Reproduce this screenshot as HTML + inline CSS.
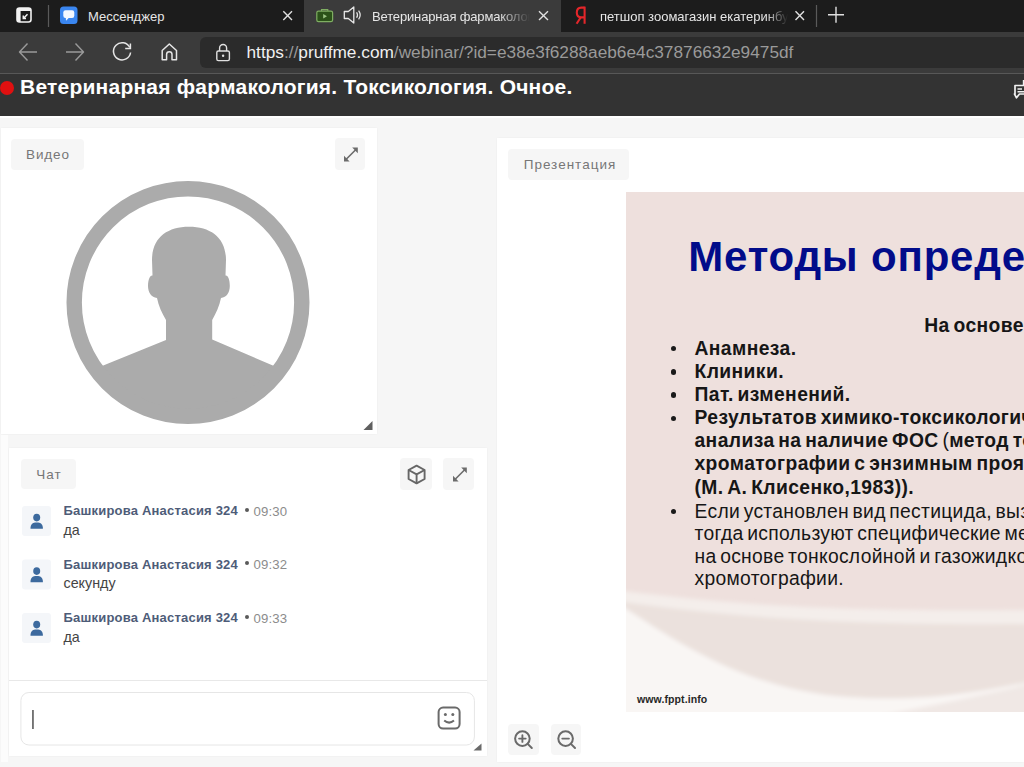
<!DOCTYPE html>
<html><head><meta charset="utf-8">
<style>
*{margin:0;padding:0;box-sizing:border-box}
html,body{width:1024px;height:767px;overflow:hidden;background:#f6f6f6;font-family:"Liberation Sans",sans-serif}
.a{position:absolute}
#tabs{left:0;top:0;width:1024px;height:32px;background:#1c1c1c}
#toolbar{left:0;top:32px;width:1024px;height:42px;background:#3b3b3b}
#actab{left:304px;top:0;width:257px;height:34px;background:#3b3b3b}
.ttl{font-size:13px;color:#e6e6e6;white-space:nowrap;top:9px}
#addr{left:199.5px;top:37px;width:825px;height:30.8px;background:#2b2b2b;border-radius:6px 0 0 6px}
#tbline{left:0;top:73px;width:1024px;height:1px;background:#585858}
#hdr{left:0;top:74px;width:1024px;height:41.6px;background:#333}
#title{left:20px;top:74.5px;font-size:21px;font-weight:bold;color:#fff;white-space:nowrap;letter-spacing:0.22px}
.panel{background:#fff;box-shadow:0 0 2px rgba(0,0,0,0.05)}
.badge{background:#f6f6f6;border-radius:4px}
.bt{color:#777;font-size:13.5px;line-height:13.5px;white-space:nowrap}
.btn{background:#f6f6f6;border-radius:4px}
.nm{font-size:13px;line-height:13px;font-weight:bold;letter-spacing:0.2px;color:#4e5c78;white-space:nowrap}
.dot{width:4px;height:4px;border-radius:50%;background:#5a5a5a}
.tm{font-size:13.2px;line-height:13.2px;letter-spacing:0.2px;color:#8c8c8c;white-space:nowrap}
.tx{font-size:14.3px;line-height:14.3px;color:#444;white-space:nowrap}
.sl{font-size:19.3px;line-height:19.3px;white-space:nowrap;color:#161616;letter-spacing:0.3px;word-spacing:-2px}
.b{font-weight:bold;letter-spacing:0.4px;word-spacing:-2px}
.rg{font-weight:normal}
</style></head><body>
<div id="tabs" class="a"></div>
<div id="actab" class="a"></div>
<div id="toolbar" class="a"></div>
<div id="addr" class="a"></div>
<div id="tbline" class="a"></div>
<div id="hdr" class="a"></div>
<div class="a" style="left:0;top:115.6px;width:1024px;height:2.6px;background:#fff"></div>
<div class="a" style="left:0;top:81px;width:14px;height:14px;border-radius:50%;background:#e01010"></div>
<svg class="a" style="left:1000px;top:74px" width="24" height="41">
 <path d="M15 11.5 H30 V20 H19.5 L16.5 23.8 L14.5 20 H15 Z" fill="none" stroke="#f0f0f0" stroke-width="1.7" stroke-linejoin="round"/>
 <path d="M17.5 15 H22 M17.5 17.8 H26" stroke="#f0f0f0" stroke-width="1.4"/>
 <path d="M23.5 6 V11" stroke="#f0f0f0" stroke-width="1.4"/>
</svg>
<div id="title" class="a">Ветеринарная фармакология. Токсикология. Очное.</div>

<!-- tabs content -->
<svg class="a" style="left:0;top:0" width="1024" height="32">
 <!-- workspace icon -->
 <rect x="17" y="8" width="14" height="14" rx="2.5" fill="none" stroke="#f2f2f2" stroke-width="1.6"/>
 <rect x="17" y="8" width="14" height="3" fill="#f2f2f2"/>
 <rect x="17" y="8" width="3.6" height="14" fill="#f2f2f2"/>
 <path d="M27.5 14.2 L23.6 18.2 M23.3 15.6 L23.3 18.5 L26 18.5" stroke="#f2f2f2" stroke-width="1.5" fill="none"/>
 <line x1="48.5" y1="5" x2="48.5" y2="27" stroke="#5a5a5a" stroke-width="1.2"/>
 <!-- messenger favicon -->
 <rect x="60" y="6.5" width="17.5" height="17.5" rx="3.5" fill="#3a86f0"/>
 <rect x="63.3" y="10.2" width="11" height="7.8" rx="2.2" fill="#f4f8ff"/><path d="M65.8 17.5 L66 20.8 L69.2 17.5 Z" fill="#f4f8ff"/>
 <!-- X close messenger -->
 <path d="M283.3 11.3 L292 20 M292 11.3 L283.3 20" stroke="#e0e0e0" stroke-width="1.4"/>
 <!-- active tab favicon green -->
 <rect x="316.8" y="11.2" width="15.8" height="10.4" rx="1.6" fill="#2b5219" stroke="#7fae62" stroke-width="1.2"/>
 <path d="M321.5 11 V9.6 H327.8 V11" fill="none" stroke="#7fae62" stroke-width="1.1"/>
 <path d="M323.2 14 L327 16.3 L323.2 18.6 z" fill="#9cc585"/>
 <!-- speaker -->
 <path d="M344.3 11.5 h4 l5.5 -4.6 v16.2 l-5.5 -4.6 h-4 z" fill="none" stroke="#e8e8e8" stroke-width="1.3" stroke-linejoin="round"/>
 <path d="M356.6 12.2 q1.8 2.8 0 5.6" fill="none" stroke="#e8e8e8" stroke-width="1.2"/>
 <path d="M358.6 10.6 q3.2 4.4 0 8.8" fill="none" stroke="#e8e8e8" stroke-width="1.2"/>
 <!-- X active -->
 <path d="M539 11.3 L548 20 M548 11.3 L539 20" stroke="#e0e0e0" stroke-width="1.4"/>
 <!-- X yandex -->
 <path d="M795.5 11.3 L804 20 M804 11.3 L795.5 20" stroke="#e0e0e0" stroke-width="1.4"/>
 <line x1="816.5" y1="5" x2="816.5" y2="27" stroke="#5a5a5a" stroke-width="1.2"/>
 <path d="M828 14.8 H844 M836 6.8 V22.8" stroke="#e0e0e0" stroke-width="1.4"/>
</svg>
<svg class="a" style="left:570px;top:0" width="24" height="30"><g fill="none" stroke="#e3262a" stroke-width="2.1"><path d="M14.6 6.6 V23.8"/><path d="M14.6 7.6 H11.2 C8.2 7.6 6.8 9.6 6.8 12.6 C6.8 15.6 8.4 17.4 11.2 17.4 H14.6"/><path d="M10.8 17.2 L6.6 23.8"/></g></svg>
<div class="a ttl" style="left:88px">Мессенджер</div>
<div class="a ttl" style="left:372px;width:158px;overflow:hidden;letter-spacing:-0.15px;-webkit-mask-image:linear-gradient(90deg,#000 80%,transparent 100%)">Ветеринарная фармакология</div>
<div class="a ttl" style="left:600px;width:188px;overflow:hidden;-webkit-mask-image:linear-gradient(90deg,#000 88%,transparent 100%)">петшоп зоомагазин екатеринбург</div>
<!-- toolbar icons -->
<svg class="a" style="left:0;top:32px" width="240" height="40">
 <path d="M20 20 H37 M27.5 11.5 L19.5 20 L27.5 28.5" fill="none" stroke="#9a9a9a" stroke-width="1.4" stroke-linejoin="round"/>
 <path d="M83 20 H66 M75.5 11.5 L83.5 20 L75.5 28.5" fill="none" stroke="#9a9a9a" stroke-width="1.4" stroke-linejoin="round"/>
 <path d="M129.8 15.5 A8.6 8.6 0 1 0 130.6 20.5" fill="none" stroke="#e6e6e6" stroke-width="1.5"/>
 <path d="M130.4 11.5 V16.6 H125.2" fill="none" stroke="#e6e6e6" stroke-width="1.5"/>
 <path d="M162.2 18.5 L169.3 12 L176.5 18.5 V27.7 H172 V22.5 A2.7 2.7 0 0 0 166.6 22.5 V27.7 H162.2 Z" fill="none" stroke="#e6e6e6" stroke-width="1.5" stroke-linejoin="round"/>
 <rect x="216.8" y="19" width="12.6" height="9.6" rx="1.6" fill="none" stroke="#e0e0e0" stroke-width="1.4"/>
 <path d="M219.6 19 V16 A3.5 3.5 0 0 1 226.6 16 V19" fill="none" stroke="#e0e0e0" stroke-width="1.4"/>
 <circle cx="223.1" cy="23.8" r="1.2" fill="#e0e0e0"/>
</svg>
<div class="a" style="left:246.5px;top:42px;font-size:17.25px;color:#f0f0f0;white-space:nowrap">https<span style="color:#9a9a9a">://</span>pruffme.com<span style="color:#9a9a9a">/webinar/?id=e38e3f6288aeb6e4c37876632e9475df</span></div>

<!-- video panel -->
<div class="a panel" style="left:1px;top:127.6px;width:376px;height:306.8px"></div>
<div class="a badge" style="left:11px;top:139px;width:73px;height:31px"></div>
<div class="a bt" style="left:26px;top:148.07px;letter-spacing:0.9px">Видео</div>
<div class="a btn" style="left:335px;top:138px;width:30px;height:32px"></div>
<div class="a" style="left:1px;top:435px;width:6.5px;height:327px;background:#fcfcfc"></div>
<div class="a panel" style="left:9px;top:448px;width:478px;height:308px"></div>
<div class="a btn" style="left:400px;top:458px;width:32px;height:32px"></div>
<div class="a btn" style="left:443px;top:458px;width:31px;height:32px"></div>
<div class="a panel" style="left:497px;top:138px;width:527px;height:624px"></div>
<svg class="a" style="left:0;top:0" width="500" height="767">
 <defs>
  <clipPath id="cav"><circle cx="188" cy="302.5" r="118"/></clipPath>
  <g id="exp">
   <path d="M1.5 12 L12 1.5" stroke="#6b6b6b" stroke-width="1.6"/>
   <path d="M13.6 -0.2 L13.6 5.4 L8 -0.2 Z" fill="#6b6b6b"/>
   <path d="M-0.2 13.6 L5.4 13.6 L-0.2 8 Z" fill="#6b6b6b"/>
  </g>
  <g id="usr">
   <ellipse cx="0" cy="3.6" rx="3.5" ry="3.8" fill="#3d6a9e"/>
   <path d="M-6.2 14.8 C-6.4 10.6 -4.2 8.6 -1.6 8.4 L1.6 8.4 C4.2 8.6 6.4 10.6 6.2 14.8 Z" fill="#3d6a9e"/>
  </g>
 </defs>
 <g fill="#ababab">
  <path clip-path="url(#cav)" d="M166 340 L166 320 C162 313 158.5 306 157 298 C151.5 297.5 148 292.5 148 286 C148 279.5 150 275 152.5 275.5 L152 260 C152 238 167 226.8 189 226.8 C211 226.8 226 238 226 260 L225.5 275.5 C228 275 229.8 279.5 229.8 286 C229.8 292.5 226.5 297.5 221 298 C219.5 306 216 313 212.2 320 L212.2 339.5 L274 366 C290 372 300 390 310 430 L60 430 C76 390 86 372 102 366 Z"/>
 </g>
 <circle cx="188" cy="302.5" r="113.8" fill="none" stroke="#ababab" stroke-width="15.4"/>
 <use href="#exp" x="344.2" y="147.8"/>
 <path d="M372.5 421 L372.5 430 L363.5 430 Z" fill="#5f5f5f"/>
 <!-- chat -->
 <use href="#exp" x="453.2" y="467.8"/>
 <g fill="none" stroke="#666" stroke-width="1.9" stroke-linejoin="round">
  <path d="M416.6 465.6 L424.6 470 L424.6 479 L416.6 483.4 L408.6 479 L408.6 470 Z"/>
  <path d="M408.6 470 L416.6 474.4 L424.6 470 M416.6 474.4 L416.6 483.4"/>
 </g>
 <rect x="22" y="506" width="29" height="30" rx="3" fill="#f4f6f9"/>
 <rect x="22" y="559.5" width="29" height="30" rx="3" fill="#f4f6f9"/>
 <rect x="22" y="613" width="29" height="30" rx="3" fill="#f4f6f9"/>
 <use href="#usr" x="36.7" y="514"/>
 <use href="#usr" x="36.7" y="567.5"/>
 <use href="#usr" x="36.7" y="621"/>
 <rect x="20.9" y="692.5" width="453.5" height="52.5" rx="8" fill="#fff" stroke="#e6e6e6" stroke-width="1"/>
 <rect x="32.2" y="710" width="1.5" height="19" fill="#505050"/>
 <g fill="none" stroke="#6a6a6a" stroke-width="2">
  <rect x="438.6" y="707.6" width="21" height="21" rx="4.5"/>
  <path d="M444.2 720.6 Q449.1 724.6 454 720.6"/>
 </g>
 <circle cx="445.4" cy="714.6" r="1.5" fill="#6a6a6a"/>
 <circle cx="452.8" cy="714.6" r="1.5" fill="#6a6a6a"/>
 <path d="M481.5 743.5 L481.5 750.5 L473.5 750.5 Z" fill="#6a6a6a"/>
 <line x1="9" y1="680.5" x2="487" y2="680.5" stroke="#e8e8e8" stroke-width="1.2"/>
</svg>

<!-- chat panel -->
<div class="a badge" style="left:21px;top:459px;width:55px;height:30px"></div>
<div class="a bt" style="left:36.3px;top:468.07px;letter-spacing:1px">Чат</div>

<div class="a nm" style="left:63.5px;top:504.1px">Башкирова Анастасия 324</div>
<div class="a dot" style="left:244.7px;top:507.8px"></div>
<div class="a tm" style="left:253.4px;top:504.56px">09:30</div>
<div class="a tx" style="left:63.5px;top:522.5px">да</div>
<div class="a nm" style="left:63.5px;top:557.7px">Башкирова Анастасия 324</div>
<div class="a dot" style="left:244.7px;top:561.4px"></div>
<div class="a tm" style="left:253.4px;top:558.16px">09:32</div>
<div class="a tx" style="left:63.5px;top:576.1px">секунду</div>
<div class="a nm" style="left:63.5px;top:611.3px">Башкирова Анастасия 324</div>
<div class="a dot" style="left:244.7px;top:615.0px"></div>
<div class="a tm" style="left:253.4px;top:611.76px">09:33</div>
<div class="a tx" style="left:63.5px;top:629.7px">да</div>
<!-- presentation panel -->
<div class="a badge" style="left:508px;top:149px;width:121px;height:31px"></div>
<div class="a bt" style="left:523.7px;top:158px;letter-spacing:1px">Презентация</div>
<div class="a" id="slide" style="left:626px;top:192px;width:398px;height:520px;background:#eee0dd;overflow:hidden">
<svg class="a" style="left:0;top:0" width="398" height="520">
 <defs><filter id="bl" x="-10%" y="-10%" width="120%" height="120%"><feGaussianBlur stdDeviation="2"/></filter></defs>
 <g filter="url(#bl)">
 <path d="M-10 398 C100 412 200 420 410 418 L410 530 L-10 530 Z" fill="#f4eeeb"/>
 <path d="M-10 409 C100 425 220 434 410 432 L410 490 C330 507 260 510 200 503 C110 490 50 450 -10 410 Z" fill="#ebe1dd"/>
 <path d="M-10 410 C50 450 110 490 200 503 C260 510 330 507 410 488 L410 530 L-10 530 Z" fill="#f9f6f4"/>
 <path d="M220 530 C300 515 350 505 410 490 L410 530 Z" fill="#f0e8e5"/>
 </g>
</svg>
<div class="a" style="left:62.3px;top:43.94999999999999px;font-size:42px;font-weight:bold;color:#020c8a;white-space:nowrap;line-height:42px;letter-spacing:0.8px">Методы определения</div>
<div class="a sl b" style="left:298.3px;top:123.56px">На основе:</div>
<div class="a sl b" style="left:68.5px;top:147.3px">Анамнеза.</div>
<div class="a sl b" style="left:68.5px;top:169.76px">Клиники.</div>
<div class="a sl b" style="left:68.5px;top:192.86px">Пат. изменений.</div>
<div class="a sl b" style="left:68.5px;top:216.16px">Результатов химико-токсикологического</div>
<div class="a sl b" style="left:68.5px;top:239.06px">анализа на наличие ФОС <span class="rg">(</span>метод тонкослойной</div>
<div class="a sl b" style="left:68.5px;top:261.86px">хроматографии с энзимным проявлением</div>
<div class="a sl b" style="left:68.5px;top:286px">(М. А. Клисенко,1983)).</div>
<div class="a sl" style="left:68.5px;top:309.66px">Если установлен вид пестицида, вызвавшего отравление,</div>
<div class="a sl" style="left:68.5px;top:332.26px">тогда используют специфические методы</div>
<div class="a sl" style="left:68.5px;top:354.76px">на основе тонкослойной и газожидкостной</div>
<div class="a sl" style="left:68.5px;top:377.26px">хромотографии.</div>
<div class="a" style="left:44.6px;top:153.9px;width:5.4px;height:5.4px;border-radius:50%;background:#1a1a1a"></div>
<div class="a" style="left:44.6px;top:177.2px;width:5.4px;height:5.4px;border-radius:50%;background:#1a1a1a"></div>
<div class="a" style="left:44.6px;top:200.3px;width:5.4px;height:5.4px;border-radius:50%;background:#1a1a1a"></div>
<div class="a" style="left:44.6px;top:223.6px;width:5.4px;height:5.4px;border-radius:50%;background:#1a1a1a"></div>
<div class="a" style="left:44.6px;top:317.1px;width:5.4px;height:5.4px;border-radius:50%;background:#1a1a1a"></div>
<div class="a" style="left:11px;top:501.6px;font-size:10.5px;line-height:10.5px;font-weight:bold;color:#262626;white-space:nowrap;letter-spacing:0.1px">www.fppt.info</div>
</div>
<div class="a btn" style="left:508px;top:724px;width:31px;height:31px"></div>
<div class="a btn" style="left:551px;top:724px;width:30px;height:31px"></div>
<svg class="a" style="left:500px;top:720px" width="100" height="40">
 <g fill="none" stroke="#6a6a6a" stroke-width="2" stroke-linecap="round">
  <circle cx="22.4" cy="18.6" r="7.3"/>
  <path d="M27.7 23.9 L31.8 28"/>
  <path d="M22.4 15.3 V21.9 M19.1 18.6 H25.7" stroke-width="1.9"/>
  <circle cx="65.6" cy="18.6" r="7.3"/>
  <path d="M70.9 23.9 L75 28"/>
  <path d="M62.3 18.6 H68.9" stroke-width="1.9"/>
 </g>
</svg>
</body></html>
